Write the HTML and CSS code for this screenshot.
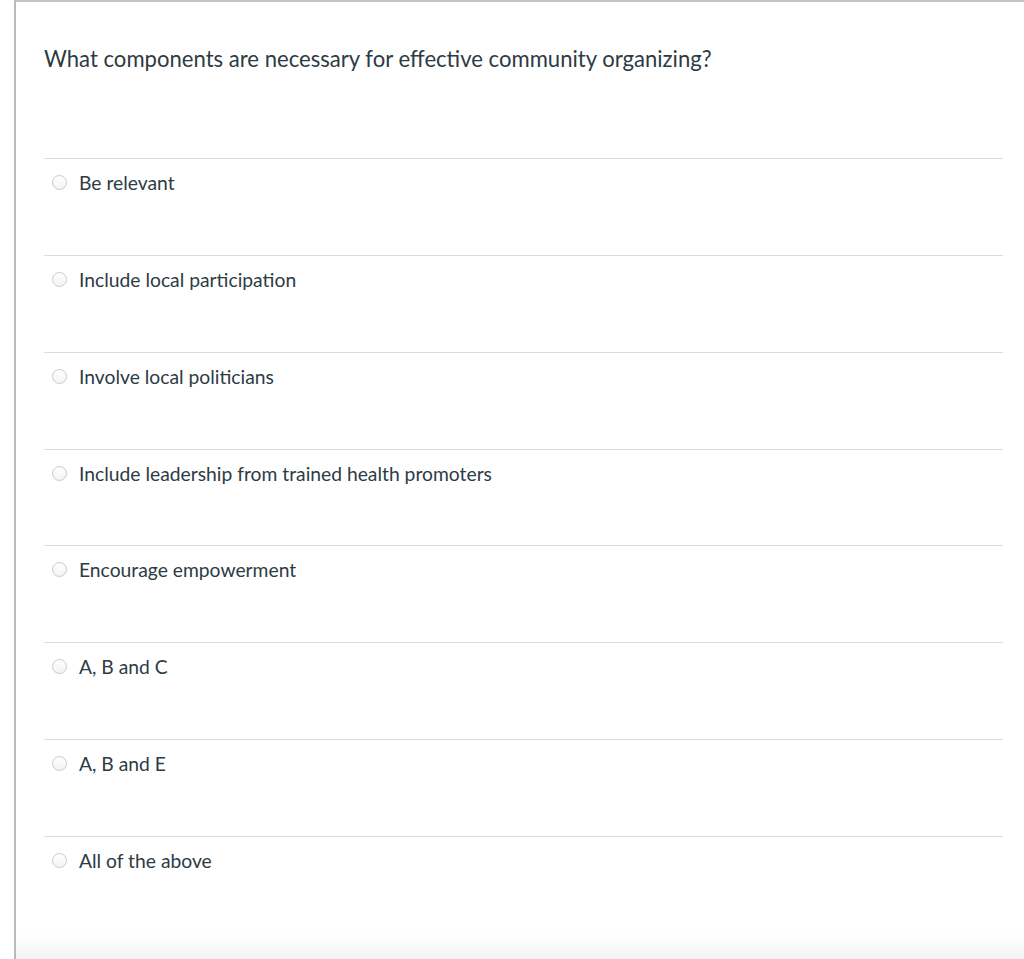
FILE: index.html
```html
<!DOCTYPE html>
<html>
<head>
<meta charset="utf-8">
<link rel="stylesheet" href="styles.css">
</head>
<body>
<div class="page">
  <div class="question">
    <div class="question-text">What components are necessary for effective community organizing?</div>
    <div class="answers">
      <label class="answer"><span class="radio"></span><span class="answer-text">Be relevant</span></label>
      <label class="answer"><span class="radio"></span><span class="answer-text">Include local participation</span></label>
      <label class="answer"><span class="radio"></span><span class="answer-text">Involve local politicians</span></label>
      <label class="answer"><span class="radio"></span><span class="answer-text">Include leadership from trained health promoters</span></label>
      <label class="answer"><span class="radio"></span><span class="answer-text">Encourage empowerment</span></label>
      <label class="answer"><span class="radio"></span><span class="answer-text">A, B and C</span></label>
      <label class="answer"><span class="radio"></span><span class="answer-text">A, B and E</span></label>
      <label class="answer"><span class="radio"></span><span class="answer-text">All of the above</span></label>
    </div>
  </div>
  <div class="fade"></div>
</div>
</body>
</html>
```
FILE: styles.css
```css
html, body {
  margin: 0;
  padding: 0;
  background: #ffffff;
}
body {
  font-family: Lato, "Helvetica Neue", Arial, sans-serif;
  color: #2d3b45;
  height: 959px;
  overflow: hidden;
}
.page {
  margin-left: 14px;
  height: 957px;
  border-left: 2px solid #b9b9b9;
  border-top: 2px solid #c4c4c4;
  display: flex;
  flex-direction: column;
}
.question {
  padding: 0 21px 0 28px;
  flex: 1;
}
.question-text {
  font-size: 22.1px;
  line-height: 28px;
  padding-top: 43px;
  height: 156px;
  box-sizing: border-box;
}
.answers {
  display: flex;
  flex-direction: column;
}
.answer {
  display: flex;
  align-items: flex-start;
  gap: 12px;
  height: 96.86px;
  box-sizing: border-box;
  border-top: 1px solid #dcdcdc;
}
.radio {
  width: 15px;
  height: 15px;
  border: 1px solid #cacaca;
  border-radius: 50%;
  box-sizing: border-box;
  margin-left: 8px;
  margin-top: 16px;
  background: linear-gradient(#ffffff, #f3f3f3);
  flex: none;
}
.answer-text {
  font-size: 19.3px;
  line-height: 24px;
  margin-top: 12px;
}
.fade {
  height: 28px;
  background: linear-gradient(#ffffff, #f4f4f4);
}
```
